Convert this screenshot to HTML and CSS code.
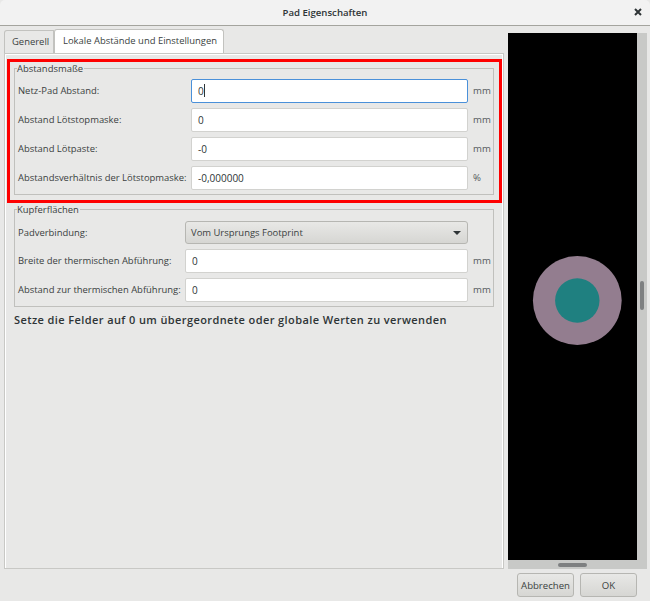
FILE: index.html
```html
<!DOCTYPE html>
<html lang="de">
<head>
  <meta charset="UTF-8" />
  <meta name="viewport" content="width=device-width, initial-scale=1.0" />
  <title>Pad Eigenschaften</title>
  <link rel="stylesheet" href="styles.css">
</head>
<body>
  <div class="dialog">
    <div class="titlebar">
      <span class="title">Pad Eigenschaften</span>
      <svg class="close" width="8" height="8" viewBox="0 0 8 8"><path d="M1 1L7 7M7 1L1 7" stroke="#2e3436" stroke-width="2" /></svg>
    </div>

    <div class="content">
      <div class="left">
        <div class="tabs">
          <div class="tab">Generell</div>
          <div class="tab active">Lokale Abstände und Einstellungen</div>
        </div>
        <div class="page">
          <div class="highlight">
            <fieldset class="group clearance">
              <legend>Abstandsmaße</legend>
              <label>Netz-Pad Abstand:</label>
              <div class="input focus">0<span class="caret"></span></div>
              <span class="unit">mm</span>
              <label>Abstand Lötstopmaske:</label>
              <div class="input">0</div>
              <span class="unit">mm</span>
              <label>Abstand Lötpaste:</label>
              <div class="input">-0</div>
              <span class="unit">mm</span>
              <label>Abstandsverhältnis der Lötstopmaske:</label>
              <div class="input">-0,000000</div>
              <span class="unit">%</span>
            </fieldset>
          </div>

          <fieldset class="group copper">
            <legend>Kupferflächen</legend>
            <label>Padverbindung:</label>
            <div class="select">
              Vom Ursprungs Footprint
              <svg width="8" height="4" viewBox="0 0 8 4"><path d="M0 0H8L4 4Z" fill="#2e3436" /></svg>
            </div>
            <span class="unit"></span>
            <label>Breite der thermischen Abführung:</label>
            <div class="input">0</div>
            <span class="unit">mm</span>
            <label>Abstand zur thermischen Abführung:</label>
            <div class="input">0</div>
            <span class="unit">mm</span>
          </fieldset>

          <p class="hint">Setze die Felder auf 0 um übergeordnete oder globale Werten zu verwenden</p>
        </div>
      </div>

      <div class="right">
        <div class="preview">
          <svg width="129" height="527" viewBox="0 0 129 527">
            <circle cx="69.3" cy="267.5" r="44.4" fill="#937d8f" />
            <circle cx="69.3" cy="267.5" r="22.2" fill="#1f8080" />
          </svg>
          <div class="vscroll"><span class="vthumb"></span></div>
        </div>
        <div class="hscroll"><span class="hthumb"></span></div>
      </div>
    </div>

    <div class="buttons">
      <button>Abbrechen</button>
      <button>OK</button>
    </div>
  </div>
</body>
</html>
```

FILE: styles.css
```css
* {
  box-sizing: border-box;
}
body {
  margin: 0;
  background: #e8e8e7;
  color: #3a3f41;
  font-family: "Open Sans", sans-serif;
  font-size: 9.45px;
}
.dialog {
  width: 650px;
  height: 601px;
  display: flex;
  flex-direction: column;
  overflow: hidden;
}
.titlebar {
  height: 26px;
  flex: none;
  display: flex;
  align-items: center;
  justify-content: center;
  background: #f2f2f2;
  border-bottom: 1px solid #a4a49e;
  border-radius: 5px 5px 0 0;
  padding-bottom: 1px;
  position: relative;
}
.title {
  font-weight: 600;
  font-size: 9.6px;
  color: #2e3436;
}
.close {
  position: absolute;
  right: 8px;
  top: 8px;
}
.content {
  display: flex;
  gap: 4px;
  padding: 3px 3px 0 4px;
  height: 543px;
  flex: none;
}
.left {
  width: 500px;
  display: flex;
  flex-direction: column;
}
.tabs {
  display: flex;
  align-items: flex-end;
  height: 24px;
  flex: none;
}
.tab {
  height: 23px;
  width: 50px;
  padding-left: 7px;
  line-height: 21px;
  white-space: nowrap;
  border: 1px solid #c2c2bf;
  border-bottom: 0;
  border-radius: 3px 0 0 0;
}
.tab.active {
  height: 24px;
  width: 170px;
  padding-left: 8px;
  background: #fff;
  border-radius: 3px 3px 0 0;
}
.page {
  flex: 1;
  border: 1px solid #c8c8c5;
  padding: 5px 1px 0 2px;
  box-shadow: inset 1px 1px 0 #fff, inset -1px 0 0 #fff;
}
.highlight {
  border: 3px solid #fe0000;
  height: 144px;
  padding-left: 4px;
}
.group {
  width: 480px;
  margin: 0;
  padding: 4px 0 0 3px;
  border: 1px solid #c0c0bd;
  display: grid;
  align-items: start;
  align-content: start;
}
.group legend {
  padding: 0 1px 0 0;
  margin-left: -1px;
  line-height: 13px;
}
.clearance {
  height: 133px;
  grid-template-columns: 173px 277px auto;
  grid-template-rows: repeat(4, 29px);
}
.copper {
  height: 104px;
  margin-left: 7px;
  padding-top: 5px;
  grid-template-columns: 167px 283px auto;
  grid-template-rows: 28px 29px 24px;
}
label {
  white-space: nowrap;
  line-height: 23px;
}
.input {
  height: 24px;
  background: #fff;
  border: 1px solid #d2d2cf;
  border-radius: 2px;
  padding-left: 6px;
  line-height: 22px;
  font-size: 10px;
  color: #2e3436;
}
.input.focus {
  border-color: #4a90d9;
}
.caret {
  display: inline-block;
  width: 1px;
  height: 13px;
  background: #2e3436;
  vertical-align: -2px;
}
.unit {
  padding-left: 5px;
  line-height: 23px;
  font-size: 9.6px;
  color: #555a5c;
}
.select {
  height: 23px;
  display: flex;
  align-items: center;
  justify-content: space-between;
  padding: 0 6px 0 5px;
  border: 1px solid #b6b6b2;
  border-radius: 3px;
  background: linear-gradient(#e8e8e6, #d6d6d3);
}
.hint {
  margin: 5px 0 0 7px;
  font-weight: 600;
  font-size: 11px;
  line-height: 16px;
  letter-spacing: 0.4px;
  white-space: nowrap;
  color: #2e3436;
}
.right {
  width: 139px;
  display: flex;
  flex-direction: column;
  margin-top: 4px;
  height: 536px;
}
.preview {
  display: flex;
  height: 527px;
  background: #000;
}
.preview svg {
  display: block;
  flex: none;
}
.vscroll {
  width: 10px;
  background: #c8c9c7;
  padding: 248px 0 0 3px;
}
.vthumb {
  display: block;
  width: 4px;
  height: 29px;
  background: #7e8081;
  border-radius: 2px;
}
.hscroll {
  width: 139px;
  height: 9px;
  background: #c8c9c7;
  padding: 3px 0 0 50px;
}
.hthumb {
  display: block;
  width: 29px;
  height: 4px;
  background: #7e8081;
  border-radius: 2px;
}
.buttons {
  display: flex;
  justify-content: flex-end;
  gap: 6px;
  padding: 4px 13px 0 0;
}
button {
  width: 57px;
  height: 24px;
  padding: 0;
  font-family: inherit;
  font-size: 9.6px;
  color: #3a3f41;
  border: 1px solid #b6b6b2;
  border-radius: 3px;
  background: linear-gradient(#e8e8e6, #d6d6d3);
}
```
